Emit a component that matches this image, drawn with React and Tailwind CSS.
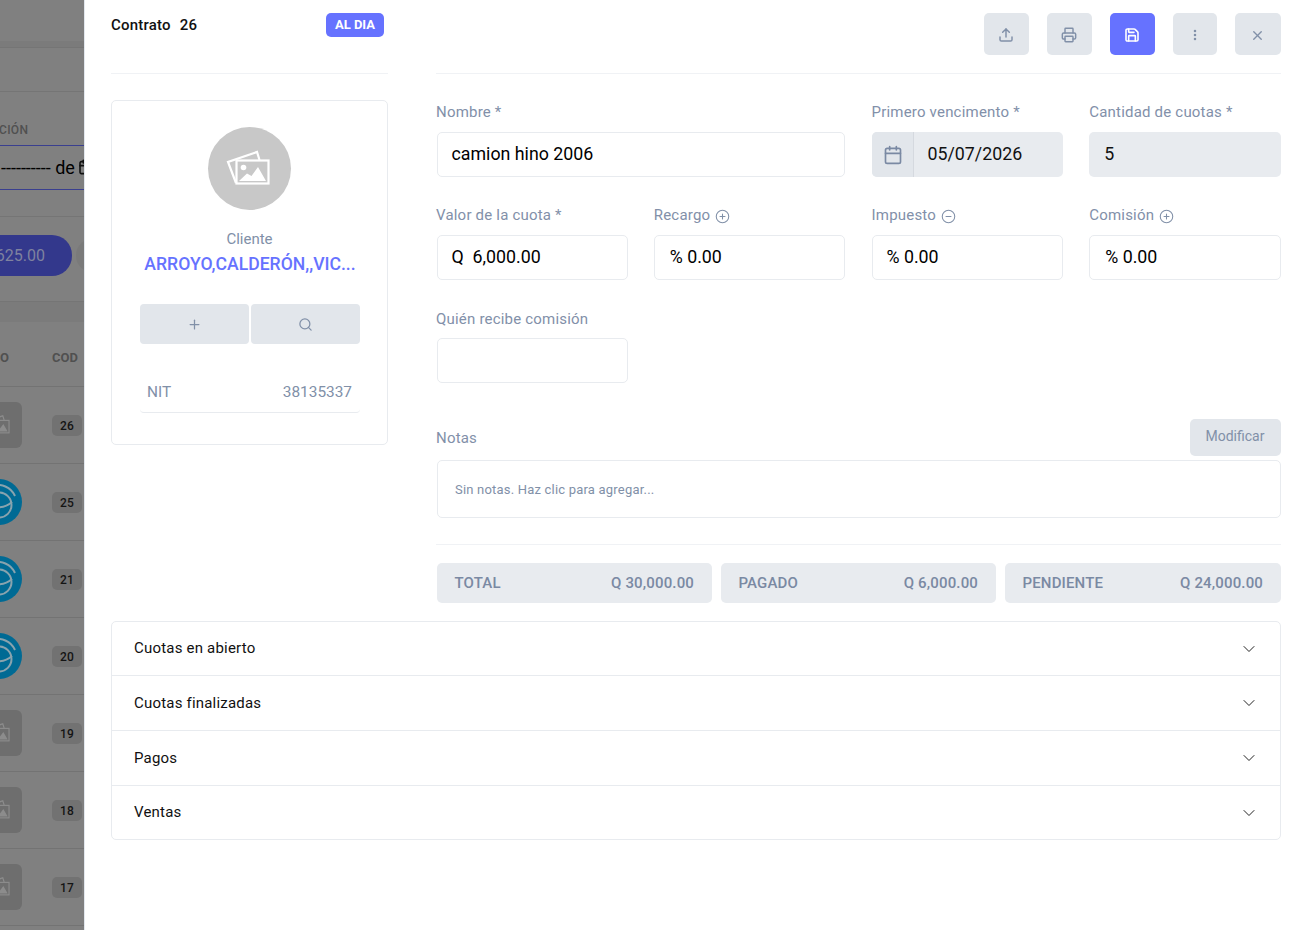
import React from "react";
import { Upload, Printer, Save, MoreVertical, X, Plus, Search, Calendar, ChevronDown, CirclePlus, CircleMinus } from "lucide-react";

const font = { fontFamily: "Roboto, sans-serif" };

function PhotoStack({ size, color }) {
  return (
    <svg viewBox="0 0 48 48" width={size} height={size} fill="none" stroke={color} strokeWidth="2.2">
      <path d="M10 38 L2 17 L31 7 L33.5 15" />
      <rect x="10.5" y="15.5" width="32" height="23" />
      <circle cx="17.5" cy="22.5" r="2.8" fill={color} stroke="none" />
      <path d="M13 36 L21 28.5 L25.5 31 L32 22 L40 36 Z" fill={color} stroke="none" />
    </svg>
  );
}

function Field({ label, icon, value, className = "", labelClass = "pt-[1px]", boxClass = "" }) {
  return (
    <div className={"flex flex-col " + className}>
      <div className={"flex items-center gap-[5px] h-[19px] text-[15px] leading-[19px] text-[#8290a9] tracking-[0.2px] " + labelClass}>
        {label}
        {icon}
      </div>
      <div className={"mt-[11px] h-[45px] rounded-[5px] border border-[#e8ebef] bg-white flex items-center text-[17.8px] text-black " + boxClass}>
        {value}
      </div>
    </div>
  );
}

function Thumb({ logo }) {
  return logo ? (
    <div className="w-[46px] h-[46px] rounded-full bg-[#006a94] overflow-hidden shrink-0">
      <svg viewBox="0 0 46 46" width="46" height="46" fill="none" stroke="#88a3ae" strokeWidth="2">
        <circle cx="23" cy="26" r="12.5" />
        <path d="M9 23c8 7 19 7 27 0" />
        <path d="M16 7c9-3 19 1 23 10" />
      </svg>
    </div>
  ) : (
    <div className="w-[46px] h-[46px] rounded-[6px] bg-[#6e6e6e] flex items-center justify-center shrink-0">
      <PhotoStack size={26} color="#8c8c8c" />
    </div>
  );
}

function Row({ n, logo }) {
  return (
    <div className="h-[77px] border-b border-[#737373] flex items-center shrink-0">
      <div className="-ml-[24px]"><Thumb logo={logo} /></div>
      <div className="ml-[30px] mt-[1px] w-[30px] h-[21px] rounded-[5px] bg-[#727272] flex items-center justify-center text-[12px] font-medium text-[#141414] tracking-[0.3px]">{n}</div>
    </div>
  );
}

function Backdrop() {
  return (
    <div className="w-[84px] h-[930px] shrink-0 bg-[#808080] overflow-hidden flex flex-col">
      <div className="h-[41px] shrink-0" />
      <div className="h-[7px] shrink-0 bg-[#7b7b7b] border-b border-[#757575]" />
      <div className="h-[44px] shrink-0 border-b border-[#757575]" />
      <div className="h-[53px] shrink-0 flex items-end pb-[6px] text-[12px] font-medium text-[#505050] tracking-[0.3px]"><span className="-ml-[1px]">CIÓN</span></div>
      <div className="h-[45px] shrink-0 border-y border-[#3a3f8f] pb-[1px] flex items-center text-[18px] text-black whitespace-nowrap">
        <span className="ml-[1px]">---------- de</span>
        <Calendar size={16} color="#111" strokeWidth={2.4} className="ml-[3px] shrink-0" />
      </div>
      <div className="h-[27px] shrink-0 border-b border-[#757575]" />
      <div className="h-[18px] shrink-0" />
      <div className="h-[41px] shrink-0 flex items-center">
        <div className="h-[41px] w-[72px] shrink-0 rounded-r-[20px] bg-[#33388c] flex items-center justify-end pr-[27px] text-[16px] text-[#7f829f]">625.00</div>
        <div className="ml-[4px] h-[33px] w-[30px] shrink-0 rounded-l-[16px] bg-[#7a7a7a]" />
      </div>
      <div className="h-[26px] shrink-0 border-b border-[#757575]" />
      <div className="h-[20px] shrink-0 bg-[#7b7b7b]" />
      <div className="h-[65px] shrink-0 border-b border-[#737373] flex items-center justify-between pt-[8px] text-[13px] font-bold text-[#505050]">
        <span>O</span>
        <span className="mr-[6px]">COD</span>
      </div>
      <Row n="26" />
      <Row n="25" logo />
      <Row n="21" logo />
      <Row n="20" logo />
      <Row n="19" />
      <Row n="18" />
      <Row n="17" />
    </div>
  );
}

function IconBtn({ children, primary, className = "w-[45px]" }) {
  return (
    <div className={"h-[42px] rounded-[5px] flex items-center justify-center pt-[2px] pr-[1px] " + className + " " + (primary ? "bg-[#6672ff]" : "bg-[#e2e6eb]")}>
      {children}
    </div>
  );
}

function Summary({ label, value, className }) {
  return (
    <div className={"h-[40px] rounded-[5px] bg-[#e8ebef] pl-[17.5px] pr-[18px] flex items-center justify-between text-[15px] font-medium text-[#7a89a3] tracking-[0.15px] " + className}>
      <span>{label}</span>
      <span>{value}</span>
    </div>
  );
}

function Acc({ label, h, last }) {
  return (
    <div className={"flex items-center justify-between pl-[22px] pr-[21px] text-[15px] tracking-[0.2px] text-[#111] " + h + (last ? "" : " border-b border-[#e8ebef]")}>
      <span>{label}</span>
      <ChevronDown size={20} color="#222" strokeWidth={1.2} />
    </div>
  );
}

export default function App() {
  const muted = "#8190a8";
  const iconClass = "mt-[2px]";
  return (
    <div className="w-[1302px] h-[930px] flex overflow-hidden bg-white" style={font}>
      <Backdrop />
      <div className="flex-1 h-[930px] border-l border-[#e3e8ee] pl-[26px] pr-[21px] flex flex-col">
        <div className="flex gap-[48px]">
          {/* left */}
          <div className="w-[277px] shrink-0 flex flex-col">
            <div className="h-[74px] border-b border-[#f0f2f5] flex items-start justify-between pt-[13px]">
              <div className="flex gap-[9px] text-[15px] font-medium leading-[24px] text-[#111] tracking-[0.2px]">
                <span>Contrato</span><span>26</span>
              </div>
              <div className="h-[24px] px-[9px] rounded-[5px] bg-[#6672ff] text-white text-[13px] font-bold flex items-center mr-[4px]">AL DIA</div>
            </div>
            <div className="mt-[26px] h-[345px] border border-[#e8ebef] rounded-[5px] flex flex-col items-center pt-[26px] pl-[28px] pr-[27px]">
              <div className="w-[83px] h-[83px] mr-[1px] rounded-full bg-[#c8c8c8] flex items-center justify-center">
                <PhotoStack size={48} color="#fff" />
              </div>
              <div className="mt-[20px] mr-[1px] text-[15px] leading-[19px] text-[#8190a8]">Cliente</div>
              <div className="mt-[3px] text-[17.6px] leading-[24px] font-medium text-[#6672ff] whitespace-nowrap">ARROYO,CALDERÓN,,VIC...</div>
              <div className="mt-[28px] w-full flex gap-[2px]">
                <div className="flex-1 h-[40px] rounded-[4px] bg-[#e2e6eb] flex items-center justify-center"><Plus size={15} color={muted} /></div>
                <div className="flex-1 h-[40px] rounded-[4px] bg-[#e2e6eb] flex items-center justify-center"><Search size={15} color={muted} /></div>
              </div>
              <div className="mt-[28px] w-full h-[41px] border-b border-[#e8ebef] rounded-b-[4px] flex items-start justify-between pl-[7px] pr-[8px] pt-[10px] text-[15.4px] leading-[20px] text-[#8190a8]">
                <span>NIT</span><span>38135337</span>
              </div>
            </div>
          </div>
          {/* right */}
          <div className="flex-1 flex flex-col">
            <div className="h-[74px] border-b border-[#f0f2f5] flex items-start justify-end pt-[13px] gap-[18px]">
              <IconBtn><Upload size={16} color={muted} strokeWidth={2.2} /></IconBtn>
              <IconBtn><Printer size={16} color={muted} strokeWidth={2.2} /></IconBtn>
              <IconBtn primary><Save size={16} color="#fff" strokeWidth={2.4} /></IconBtn>
              <IconBtn className="w-[44px]"><MoreVertical size={14} color={muted} strokeWidth={2.4} /></IconBtn>
              <IconBtn className="w-[46px]"><X size={15} color={muted} strokeWidth={2.2} /></IconBtn>
            </div>
            <div className="mt-[28px] grid grid-cols-4 gap-x-[26px] gap-y-[28px]">
              <Field label="Nombre *" value="camion hino 2006" className="col-span-2" boxClass="ml-[0.5px] mr-[0.5px] pl-[14px] pb-[1px]" />
              <div className="flex flex-col">
                <div className="h-[19px] pt-[1px] text-[15px] leading-[19px] text-[#8290a9] tracking-[0.2px]">Primero vencimento *</div>
                <div className="mt-[11px] h-[45px] rounded-[5px] bg-[#e8ebef] flex items-center text-[17.8px] text-[#111] overflow-hidden">
                  <div className="w-[42px] h-full pl-[1px] bg-[#e2e6eb] border-r border-[#d5d9df] flex items-center justify-center shrink-0"><Calendar size={20} color="#7a89a3" strokeWidth={2} /></div>
                  <span className="ml-[14px] -mt-[1px]">05/07/2026</span>
                </div>
              </div>
              <div className="flex flex-col">
                <div className="h-[19px] pt-[1px] text-[15px] leading-[19px] text-[#8290a9] tracking-[0.2px]">Cantidad de cuotas *</div>
                <div className="mt-[11px] h-[45px] rounded-[5px] bg-[#e8ebef] flex items-center px-[15px] pb-[1px] text-[17.8px] text-[#111]">5</div>
              </div>
              <Field label="Valor de la cuota *" value={<span className="whitespace-pre">Q  6,000.00</span>} boxClass="ml-[0.5px] pl-[14px]" />
              <Field label="Recargo" icon={<CirclePlus size={15} color={muted} strokeWidth={1.7} className={iconClass} />} value="% 0.00" boxClass="mr-[0.5px] pl-[15px]" />
              <Field label="Impuesto" icon={<CircleMinus size={15} color={muted} strokeWidth={1.7} className={iconClass} />} value="% 0.00" boxClass="pl-[14px]" />
              <Field label="Comisión" icon={<CirclePlus size={15} color={muted} strokeWidth={1.7} className={iconClass} />} value="% 0.00" boxClass="pl-[15px]" />
              <Field label="Quién recibe comisión" value="" labelClass="pt-[3px]" boxClass="ml-[0.5px]" />
            </div>
            <div className="mt-[36px] flex items-end justify-between">
              <div className="text-[15px] leading-[19px] text-[#8290a9] tracking-[0.2px] mb-[8px]">Notas</div>
              <div className="h-[37px] w-[91px] rounded-[5px] bg-[#e2e6eb] pb-[2px] pr-[1px] flex items-center justify-center text-[14px] text-[#8190a8]">Modificar</div>
            </div>
            <div className="mt-[4px] ml-[0.5px] h-[58px] rounded-[5px] border border-[#e8ebef] pt-[2px] flex items-center px-[17.5px] text-[13px] tracking-[0.2px] text-[#8190a8]">Sin notas. Haz clic para agregar...</div>
            <div className="mt-[26px] pt-[18px] border-t border-[#f0f2f5] flex gap-[9px] pl-[1px]">
              <Summary label="TOTAL" value="Q 30,000.00" className="w-[275px]" />
              <Summary label="PAGADO" value="Q 6,000.00" className="w-[275px]" />
              <Summary label="PENDIENTE" value="Q 24,000.00" className="w-[276px]" />
            </div>
          </div>
        </div>
        <div className="mt-[18px] border border-[#e8ebef] rounded-[5px] flex flex-col">
          <Acc label="Cuotas en abierto" h="h-[54px]" />
          <Acc label="Cuotas finalizadas" h="h-[55px]" />
          <Acc label="Pagos" h="h-[55px]" />
          <Acc label="Ventas" h="h-[53px]" last />
        </div>
      </div>
    </div>
  );
}
